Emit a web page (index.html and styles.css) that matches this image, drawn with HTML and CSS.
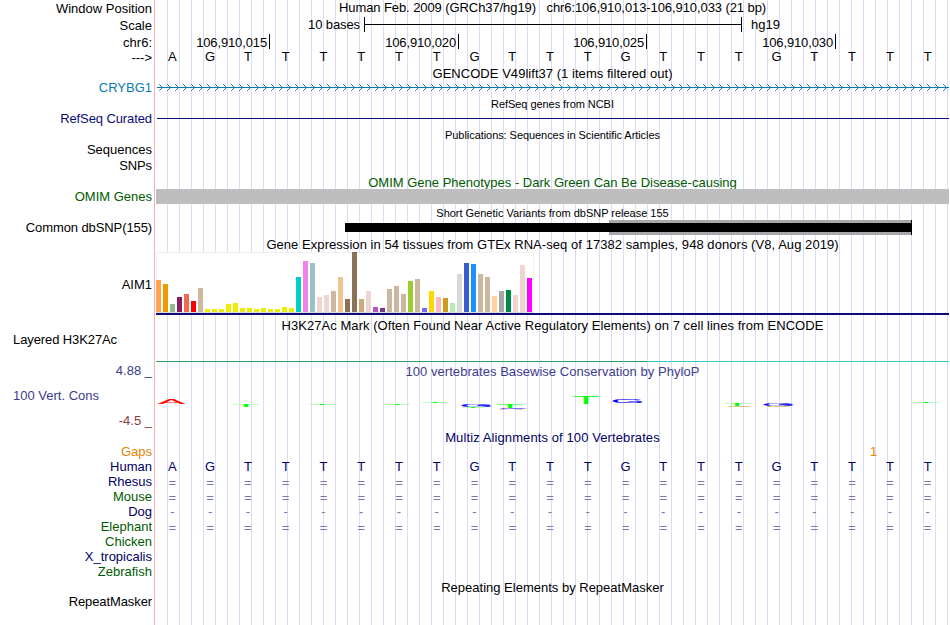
FILE: index.html
```html
<!DOCTYPE html>
<html lang="en">
<head>
    <meta charset="UTF-8">
    <meta name="viewport" content="width=device-width, initial-scale=1.0">
    <title>Human chr6:106,910,013-106,910,033</title>
    <link rel="stylesheet" href="styles.css">
</head>
<body>

    <div class="browser">

        <!-- Ruler -->
        <div class="row row-position">
            <div class="label down">Window Position</div>
            <div class="track title t-position">Human Feb. 2009 (GRCh37/hg19) &nbsp; chr6:106,910,013-106,910,033 (21 bp)</div>
        </div>
        <div class="row row-scale">
            <div class="label down">Scale</div>
            <div class="track scale">
                <span class="scale-size">10 bases</span>
                <span class="scale-bar"></span>
                <span class="scale-db">hg19</span>
            </div>
        </div>
        <div class="row row-ticks">
            <div class="label down">chr6:</div>
            <div class="track ticks">
                <span class="tick first">106,910,015</span>
                <span class="tick">106,910,020</span>
                <span class="tick short">106,910,025</span>
                <span class="tick">106,910,030</span>
            </div>
        </div>
        <div class="row row-bases">
            <div class="label down">---&gt;</div>
            <div class="track bases" data-bases="AGTTTTTTGTTTGTTTGTTTT"></div>
        </div>

        <!-- Genes -->
        <div class="row row-gencode-title"><div class="track title t-gencode">GENCODE V49lift37 (1 items filtered out)</div></div>
        <div class="row">
            <div class="label crybg1">CRYBG1</div>
            <div class="track">
                <svg class="intron" width="793" height="15" viewBox="0 0 793 15">
                    <defs>
                        <pattern id="arrows" x="3" y="4" width="8" height="7" patternUnits="userSpaceOnUse">
                            <path d="M0.3 0.3 L3.5 3.5 L0.3 6.7" fill="none" stroke="#0c78b4"/>
                        </pattern>
                    </defs>
                    <rect x="3" y="4" width="790" height="7" fill="url(#arrows)"/>
                    <rect x="1" y="7" width="792" height="1" fill="#0c78b4"/>
                </svg>
            </div>
        </div>
        <div class="row row-small"><div class="track title small">RefSeq genes from NCBI</div></div>
        <div class="row">
            <div class="label refseq tight">RefSeq Curated</div>
            <div class="track"><div class="refseq-line"></div></div>
        </div>

        <!-- Publications -->
        <div class="row row-small"><div class="track title small">Publications: Sequences in Scientific Articles</div></div>
        <div class="row row-pub"><div class="label">Sequences</div></div>
        <div class="row row-pub"><div class="label tight">SNPs</div></div>

        <!-- OMIM -->
        <div class="row row-omim-title"><div class="track title green">OMIM Gene Phenotypes - Dark Green Can Be Disease-causing</div></div>
        <div class="row">
            <div class="label green">OMIM Genes</div>
            <div class="track omim-bar"></div>
        </div>

        <!-- dbSNP -->
        <div class="row row-small"><div class="track title small t-dbsnp">Short Genetic Variants from dbSNP release 155</div></div>
        <div class="row">
            <div class="label tight">Common dbSNP(155)</div>
            <div class="track snp">
                <div class="snp-thin"></div>
                <div class="snp-wide"></div>
            </div>
        </div>

        <!-- GTEx -->
        <div class="row row-gtex-title"><div class="track title t-gtex">Gene Expression in 54 tissues from GTEx RNA-seq of 17382 samples, 948 donors (V8, Aug 2019)</div></div>
        <div class="row row-gtex">
            <div class="label gtex-label">AIM1</div>
            <div class="track gtex"><div class="gtex-chart" id="gtex"></div></div>
        </div>

        <!-- H3K27Ac -->
        <div class="row row-h3k-title"><div class="track title t-h3k">H3K27Ac Mark (Often Found Near Active Regulatory Elements) on 7 cell lines from ENCODE</div></div>
        <div class="row row-h3k">
            <div class="label left tight">Layered H3K27Ac</div>
            <div class="track h3k"></div>
        </div>

        <!-- Conservation -->
        <div class="row row-phylop-title">
            <div class="label phylop">4.88 _</div>
            <div class="track title phylop down t-phylop">100 vertebrates Basewise Conservation by PhyloP</div>
        </div>
        <div class="row row-phylop">
            <div class="label cons-label">
                <span class="cons-name">100 Vert. Cons</span>
                <span class="cons-min">-4.5 _</span>
            </div>
            <svg class="track" id="logo" width="793" height="49" viewBox="156 379 793 49"></svg>
        </div>

        <!-- Multiz -->
        <div class="row row-multiz-title"><div class="track title navy t-multiz">Multiz Alignments of 100 Vertebrates</div></div>
        <div class="row">
            <div class="label gaps">Gaps</div>
            <div class="track gaps gap-count">1</div>
        </div>
        <div class="row">
            <div class="label navy">Human</div>
            <div class="track bases navy" data-bases="AGTTTTTTGTTTGTTTGTTTT"></div>
        </div>
        <div class="row">
            <div class="label navy">Rhesus</div>
            <div class="track bases match down" data-bases="====================="></div>
        </div>
        <div class="row">
            <div class="label green">Mouse</div>
            <div class="track bases match down" data-bases="====================="></div>
        </div>
        <div class="row">
            <div class="label navy">Dog</div>
            <div class="track bases match" data-bases="---------------------"></div>
        </div>
        <div class="row">
            <div class="label green">Elephant</div>
            <div class="track bases match down" data-bases="====================="></div>
        </div>
        <div class="row"><div class="label green">Chicken</div></div>
        <div class="row"><div class="label navy">X_tropicalis</div></div>
        <div class="row"><div class="label green">Zebrafish</div></div>

        <!-- RepeatMasker -->
        <div class="row row-rmsk-title"><div class="track title">Repeating Elements by RepeatMasker</div></div>
        <div class="row"><div class="label tight">RepeatMasker</div></div>
    </div>

    <script src="script.js"></script>
</body>
</html>
```
FILE: styles.css
```css
/* --- Basic Setup --- */
body {
    margin: 0;
    background-color: #fff;
    color: #000;
    font-family: "Liberation Sans", Arial, Helvetica, sans-serif;
    font-size: 13px;
    line-height: 15px;
}

/* Red divider first, then a guideline every 12px */
.browser {
    box-sizing: border-box;
    width: 950px;
    height: 625px;
    overflow: hidden;
    background-image:
        linear-gradient(#ffb0b0, #ffb0b0),
        repeating-linear-gradient(to right, #dcdcf8 0, #dcdcf8 1px, transparent 1px, transparent 12px);
    background-size: 1px 100%, 782px 100%;
    background-position: 154px 0, 167px 0;
    background-repeat: no-repeat;
}

/* --- Rows --- */
.row {
    display: flex;
    height: 15px;
    white-space: nowrap;
}

.label {
    flex: none;
    box-sizing: border-box;
    width: 156px;
    padding-right: 4px;
    text-align: right;
}

.label.left { text-align: left; padding-left: 13px; }
.label.tight { letter-spacing: -0.1px; }
.track { flex: none; width: 793px; }
.row > .track:only-child { margin-left: 156px; }
.title { text-align: center; }
.small { font-size: 11px; letter-spacing: -0.06px; }
.down { padding-top: 1px; }

/* title tracking */
.t-position { letter-spacing: -0.085px; }
.t-gencode { letter-spacing: 0.04px; }
.t-dbsnp { letter-spacing: -0.02px; }
.t-gtex { letter-spacing: 0.055px; }
.t-h3k { letter-spacing: 0.05px; }
.t-phylop { letter-spacing: 0.04px; }
.t-multiz { letter-spacing: 0.1px; }

.row-position { height: 17px; }
.row-scale { height: 17px; }
.row-ticks { height: 15px; }
.row-bases { height: 17px; }
.row-gencode-title { height: 14px; }
.row-small { height: 14px; padding-top: 2px; }
.row-pub { height: 16px; }
.row-omim-title { height: 14px; padding-top: 1px; }
.row-gtex-title { height: 15px; padding-top: 2px; }
.row-gtex { height: 63px; }
.row-h3k-title { height: 14px; padding-top: 3px; }
.row-h3k { height: 30px; }
.row-phylop-title { height: 16px; padding-top: 1px; }
.row-phylop { height: 49px; }
.row-multiz-title { height: 14px; padding-top: 2px; }
.row-rmsk-title { height: 14px; padding-top: 1px; }

/* --- Colors --- */
.crybg1 { color: #0c78b4; }
.refseq { color: #0c0c78; }
.green { color: #005a00; }
.navy { color: #000064; }
.phylop { color: #3c3c8c; }
.gaps { color: #e68200; }
.match { color: #7878b0; }

/* --- Ruler --- */
.scale { display: flex; }

.scale-size {
    width: 204px;
    margin-right: 4px;
    text-align: right;
    letter-spacing: -0.1px;
}

.scale-bar {
    box-sizing: border-box;
    width: 378px;
    height: 15px;
    border: solid #000;
    border-width: 0 1px;
    background: linear-gradient(#000, #000) 0 7px / 100% 1px no-repeat;
}

.scale-db { margin-left: 9px; }

.ticks { display: flex; }

.tick {
    box-sizing: border-box;
    width: 189px;
    height: 15px;
    padding: 1px 2px 0 0;
    border-right: 1px solid #000;
    text-align: right;
    letter-spacing: -0.13px;
}

.tick.first { width: 114px; }
.tick.short { width: 188px; }

.bases {
    display: grid;
    grid-template-columns: repeat(21, 1fr);
    text-align: center;
}

/* letters sit a little left of the middle of their base */
.bases span { padding-right: 5px; }

/* --- Gene lines --- */
.intron { display: block; }

.refseq-line {
    height: 1px;
    margin: 7px 0 0 1px;
    background-color: #0c0c78;
}

.omim-bar { background-color: #bebebe; }

/* --- dbSNP --- */
.snp {
    display: flex;
    align-items: center;
}

.snp-thin {
    width: 264px;
    height: 9px;
    margin-left: 189px;
    background-color: #000;
}

.snp-wide {
    box-sizing: border-box;
    width: 303px;
    height: 15px;
    border-right: 1px solid #000;
    background: linear-gradient(#a8a8a8 3px, #000 3px, #000 12px, #a8a8a8 12px);
}

/* --- GTEx --- */
.gtex-label { padding-top: 25px; }

.gtex {
    box-sizing: border-box;
    border-bottom: 2px solid #0c0c78;
}

.gtex-chart {
    display: flex;
    align-items: flex-end;
    gap: 2px;
    box-sizing: border-box;
    width: 378px;
    height: 61px;
    border-bottom: 1px solid #dcdcdc;
    background-color: #fff;
    box-shadow: inset 1px 1px #f0f0f0, inset -1px 0 #f0f0f0;
}

.gtex-bar { width: 5px; }

/* --- H3K27Ac --- */
.h3k { background: linear-gradient(to right, #2ea064 491px, #32c8c8 491px) 0 29px / 100% 1px no-repeat; }

/* --- Conservation --- */
.cons-label {
    display: flex;
    flex-direction: column;
    justify-content: space-between;
    padding-top: 9px;
}

.cons-name {
    padding-left: 13px;
    text-align: left;
    color: #3c3c8c;
}

.cons-min { color: #8c3c3c; }

#logo text {
    font-size: 46px;
    text-anchor: middle;
}

/* the squashed curves and diagonals get too thin without this */
#logo .heavy { stroke-width: 0.8px; }

.gap-count {
    box-sizing: border-box;
    padding-left: 714px;
}
```
FILE: script.js
```js
// One cell per base
document.querySelectorAll('.bases').forEach(row => {
    for (const base of row.dataset.bases) {
        const cell = document.createElement('span');
        cell.textContent = base;
        row.appendChild(cell);
    }
});

// GTEx tissues: [color, height]
const tissues = [
    ['#ffa54f', 32], ['#ee9a00', 28], ['#8fbc8f', 8], ['#8b1c62', 15], ['#ee6a50', 18], ['#ff0000', 11],
    ['#cdb79e', 24], ['#eeee00', 3], ['#eeee00', 3], ['#eeee00', 3], ['#eeee00', 8], ['#eeee00', 9],
    ['#eeee00', 4], ['#eeee00', 4], ['#eeee00', 3], ['#eeee00', 4], ['#eeee00', 3], ['#eeee00', 3],
    ['#eeee00', 5], ['#eeee00', 4], ['#00cdcd', 35], ['#ee82ee', 51], ['#9ac0cd', 49], ['#eed5d2', 15],
    ['#eed5d2', 17], ['#cdb79e', 21], ['#eec591', 35], ['#8b7355', 13], ['#8b7355', 60], ['#cdaa7d', 13],
    ['#eed5d2', 21], ['#b452cd', 5], ['#7a378b', 4], ['#cdb79e', 23], ['#cdb79e', 26], ['#cdb79e', 18],
    ['#9acd32', 31], ['#cdb79e', 33], ['#7a67ee', 4], ['#ffd700', 21], ['#ffb6c1', 15], ['#cd9b1d', 14],
    ['#b4eeb4', 9], ['#d9d9d9', 38], ['#3a5fcd', 49], ['#1e90ff', 48], ['#cdb79e', 38], ['#cdb79e', 35],
    ['#ffd39b', 16], ['#a6a6a6', 21], ['#008b45', 22], ['#eed5d2', 17], ['#eed5d2', 47], ['#ff00ff', 34]
];

const chart = document.getElementById('gtex');
tissues.forEach(([color, height]) => {
    const bar = document.createElement('div');
    bar.className = 'gtex-bar';
    bar.style.height = height + 'px';
    bar.style.backgroundColor = color;
    chart.appendChild(bar);
});

// PhyloP logo: [letter, color, center x, top y, height, width factor]
const logo = document.getElementById('logo');
const CAP_HEIGHT = 31.7;
const letters = [
    ['A', '#ff0000', 171.5, 398.2, 5.4, 0.88],
    ['T', '#00ff00', 246, 404, 3, 1],
    ['T', '#00ff00', 322, 404, 1, 1],
    ['T', '#00ff00', 397, 404, 1, 1],
    ['T', '#00ff00', 435, 402, 1, 1],
    ['T', '#00ff00', 473, 407, 1, 0.9],
    ['G', '#0000ff', 476.5, 404, 3, 0.94],
    ['T', '#00ff00', 510, 404, 4, 1],
    ['C', '#0000ff', 513, 408, 1, 0.94],
    ['A', '#ff0000', 511, 409, 1, 0.84],
    ['T', '#00ff00', 586, 396, 8, 1],
    ['G', '#0000ff', 627.5, 399, 4, 0.94],
    ['T', '#00ff00', 737, 404, 2, 1],
    ['C', '#c8a000', 739, 406, 1, 0.85],
    ['G', '#0000ff', 778.5, 404, 2, 0.94],
    ['C', '#c8a000', 778, 406, 1, 0.85],
    ['T', '#00ff00', 926, 402, 1, 1]
];

letters.forEach(([letter, color, x, y, height, stretch]) => {
    const text = document.createElementNS('http://www.w3.org/2000/svg', 'text');
    text.setAttribute('transform', `translate(${x} ${y + height}) scale(${stretch} ${height / CAP_HEIGHT})`);
    text.setAttribute('fill', color);
    if (letter !== 'T' && height > 1) {
        text.setAttribute('class', 'heavy');
        text.setAttribute('stroke', color);
    }
    text.textContent = letter;
    logo.appendChild(text);
});
```
